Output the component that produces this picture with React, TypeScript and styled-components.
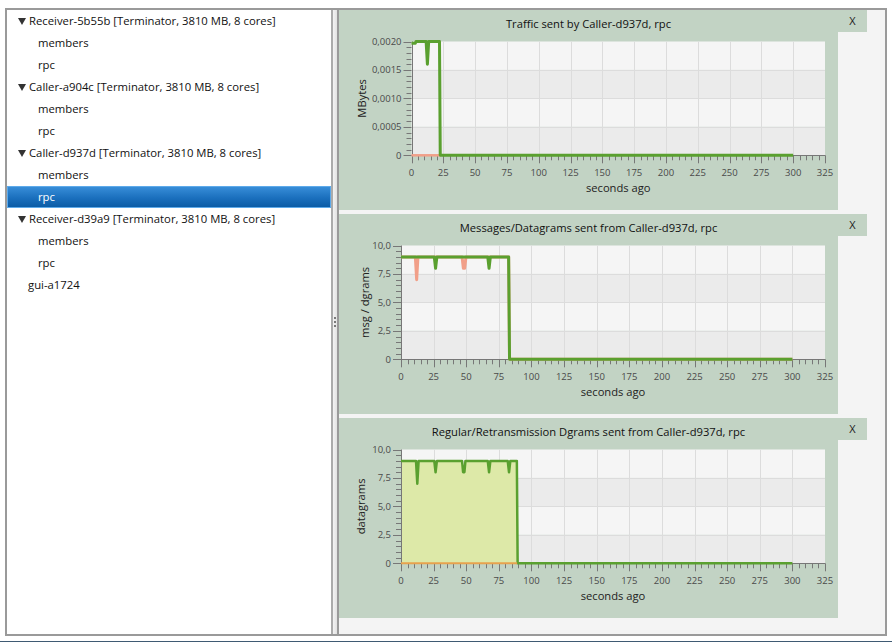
import React from 'react';
import styled, { createGlobalStyle } from 'styled-components';

const GlobalStyle = createGlobalStyle`
  html, body { margin: 0; padding: 0; background: #ffffff; }
  body { font-family: "Open Sans", "Noto Sans", sans-serif; }
`;

const Page = styled.div`
  width: 892px;
  height: 642px;
  box-sizing: border-box;
  padding: 8px 5px 0 5px;
  display: flex;
  flex-direction: column;
  background: #ffffff;
`;

const Frame = styled.div`
  height: 628px;
  box-sizing: border-box;
  border: 2px solid #9a9a9a;
  display: flex;
`;

const StatusEdge = styled.div`
  margin: 5px -5px 0;
  height: 1px;
  background: #3f5a73;
`;

const TreePane = styled.div`
  width: 324px;
  background: #ffffff;
  display: flex;
  flex-direction: column;
  font-size: 11.3px;
  color: #111111;
`;

const TreeRow = styled.div<{ $indent: number; $selected?: boolean }>`
  height: 22px;
  line-height: 22px;
  padding-left: ${(p) => p.$indent}px;
  white-space: nowrap;
  display: flex;
  align-items: center;
  box-sizing: border-box;
  color: ${(p) => (p.$selected ? '#ffffff' : '#111111')};
  background: ${(p) =>
    p.$selected ? 'linear-gradient(to bottom, #3a90da 0%, #1a6fbd 55%, #0a5aa3 100%)' : 'transparent'};
  box-shadow: ${(p) => (p.$selected ? 'inset 0 0 0 1px #5eaaea' : 'none')};
`;

const Disclosure = styled.span`
  display: inline-block;
  width: 0;
  height: 0;
  border-left: 4px solid transparent;
  border-right: 4px solid transparent;
  border-top: 7px solid #333333;
  margin-right: 3px;
  margin-top: 1px;
`;

const Divider = styled.div`
  width: 8px;
  box-sizing: border-box;
  border-left: 2px solid #ababab;
  border-right: 2px solid #9a9a9a;
  background: linear-gradient(to right, #f3f3f3, #e2e2e2);
  display: flex;
  flex-direction: column;
  align-items: center;
  justify-content: center;
  gap: 2px;
`;

const GripDot = styled.div`
  width: 2px;
  height: 2px;
  background: #7a7a7a;
`;

const ChartsPane = styled.div`
  flex: 1;
  background: #f4f4f4;
  display: flex;
  flex-direction: column;
  gap: 4px;
`;

const ChartRow = styled.div`
  display: flex;
  align-items: flex-start;
`;

const ChartPanel = styled.div`
  width: 499px;
  height: 200px;
  background: #c2d3c4;
  display: flex;
  flex-direction: column;
`;

const ChartTitle = styled.div`
  height: 25px;
  line-height: 27px;
  text-align: center;
  font-size: 11.2px;
  color: #111111;
`;

const CloseButton = styled.div`
  width: 29px;
  height: 22px;
  line-height: 21px;
  text-align: center;
  font-size: 11px;
  color: #222222;
  background: #c2d3c4;
`;

type Pt = [number, number];
interface Series {
  pts: Pt[];
  color: string;
  width: number;
  fill?: string;
}

interface ChartProps {
  title: string;
  yLabel: string;
  yLabelX: number;
  yMax: number;
  yTickLabels: string[];
  left: number;
  series: Series[];
}

const RIGHT = 486;
const TOP = 6.5;
const BOTTOM = 120.3;
const XMAX = 325;
const GREEN = '#5aa02f';
const SALMON = '#f19f88';

const Chart: React.FC<ChartProps> = ({ title, yLabel, yLabelX, yMax, yTickLabels, left, series }) => {
  const sx = (s: number) => left + (s * (RIGHT - left)) / XMAX;
  const sy = (v: number) => BOTTOM - (v / yMax) * (BOTTOM - TOP);
  const step = yMax / 4;
  const crisp = (v: number) => Math.round(v) + 0.5;

  const bands = [0, 1, 2, 3].map((i) => {
    const y1 = sy((4 - i) * step);
    const y2 = sy((3 - i) * step);
    return (
      <rect key={`b${i}`} x={left} y={y1} width={RIGHT - left} height={y2 - y1} fill={i % 2 === 0 ? '#f5f5f5' : '#ebebeb'} />
    );
  });

  const vGrid = Array.from({ length: 12 }, (_, k) => {
    const x = crisp(sx(25 * (k + 1)));
    return <line key={`vg${k}`} x1={x} x2={x} y1={TOP} y2={BOTTOM} stroke="#dcdcdc" strokeWidth={1} />;
  });
  const hGrid = [1, 2, 3].map((j) => {
    const y = crisp(sy(j * step));
    return <line key={`hg${j}`} x1={left} x2={RIGHT} y1={y} y2={y} stroke="#dcdcdc" strokeWidth={1} />;
  });

  const xTicks: JSX.Element[] = [];
  for (let s = 0; s <= XMAX; s += 5) {
    const x = crisp(sx(s));
    const major = s % 25 === 0;
    xTicks.push(
      <line key={`xt${s}`} x1={x} x2={x} y1={BOTTOM} y2={BOTTOM + (major ? 8 : 5)} stroke="#777777" strokeWidth={1} />
    );
  }
  const yTicks: JSX.Element[] = [];
  for (let j = 0; j <= 20; j++) {
    const y = crisp(sy((j * step) / 5));
    const major = j % 5 === 0;
    yTicks.push(
      <line key={`yt${j}`} x1={left - (major ? 8 : 5)} x2={left} y1={y} y2={y} stroke="#777777" strokeWidth={1} />
    );
  }

  const xLabels = Array.from({ length: 14 }, (_, k) => (
    <text key={`xl${k}`} x={sx(25 * k)} y={141} textAnchor="middle" fontSize="9.5" fill="#4a4a4a" fontFamily="Open Sans, sans-serif">
      {25 * k}
    </text>
  ));
  const yLabels = yTickLabels.map((lab, j) => (
    <text key={`yl${j}`} x={left - 10} y={sy(j * step) + 3.4} textAnchor="end" fontSize="9.5" fill="#4a4a4a" fontFamily="Open Sans, sans-serif">
      {lab}
    </text>
  ));

  const path = (pts: Pt[]) => 'M ' + pts.map(([s, v]) => `${sx(s).toFixed(2)} ${sy(v).toFixed(2)}`).join(' L ');
  const area = (pts: Pt[]) =>
    `M ${sx(pts[0][0]).toFixed(2)} ${BOTTOM} L ` +
    pts.map(([s, v]) => `${sx(s).toFixed(2)} ${sy(v).toFixed(2)}`).join(' L ') +
    ` L ${sx(pts[pts.length - 1][0]).toFixed(2)} ${BOTTOM} Z`;

  const midY = (TOP + BOTTOM) / 2;
  const axisX = crisp(left);

  return (
    <ChartPanel>
      <ChartTitle>{title}</ChartTitle>
      <svg width={499} height={175} viewBox="0 0 499 175">
        {bands}
        {vGrid}
        {hGrid}
        {series.filter((s) => s.fill).map((s, i) => (
          <path key={`a${i}`} d={area(s.pts)} fill={s.fill} stroke="none" />
        ))}
        <line x1={axisX} x2={axisX} y1={TOP} y2={BOTTOM} stroke="#777777" strokeWidth={1} />
        <line x1={left} x2={RIGHT} y1={crisp(BOTTOM)} y2={crisp(BOTTOM)} stroke="#777777" strokeWidth={1} />
        {xTicks}
        {yTicks}
        {series.map((s, i) => (
          <path key={`s${i}`} d={path(s.pts)} fill="none" stroke={s.color} strokeWidth={s.width} strokeLinejoin="round" strokeLinecap="butt" />
        ))}
        {xLabels}
        {yLabels}
        <text x={(left + RIGHT) / 2} y={157} textAnchor="middle" fontSize="11.2" fill="#222222" fontFamily="Open Sans, sans-serif">
          seconds ago
        </text>
        <text
          x={yLabelX}
          y={midY}
          transform={`rotate(-90 ${yLabelX} ${midY})`}
          textAnchor="middle"
          fontSize="11.2"
          fill="#222222"
          fontFamily="Open Sans, sans-serif"
        >
          {yLabel}
        </text>
      </svg>
    </ChartPanel>
  );
};

const trafficSeries: Series[] = [
  { pts: [[0, 0], [23, 0]], color: SALMON, width: 2.5 },
  {
    pts: [[0, 0.00197], [3, 0.00197], [3.5, 0.002], [11.5, 0.002], [12.5, 0.0016], [13.5, 0.002], [22, 0.002], [22.6, 0], [300, 0]],
    color: GREEN,
    width: 3,
  },
];

const messageSeries: Series[] = [
  {
    pts: [[0, 9], [11, 9], [12, 7], [13, 9], [46.8, 9], [47.8, 8], [48.8, 8], [49.8, 9], [82.5, 9], [83.2, 0], [300, 0]],
    color: SALMON,
    width: 3,
  },
  {
    pts: [[0, 9], [25.5, 9], [26.5, 8], [27.5, 9], [66.5, 9], [67.5, 8], [68.5, 9], [82.5, 9], [83.2, 0], [300, 0]],
    color: GREEN,
    width: 3,
  },
];

const regularSeries: Series[] = [
  {
    pts: [
      [0, 9], [11.5, 9], [12.5, 7], [13.5, 9], [25.5, 9], [26.5, 8], [27.5, 9], [46.8, 9], [47.6, 8], [48.6, 8], [49.4, 9],
      [66.5, 9], [67.5, 8], [68.5, 9], [81.8, 9], [82.8, 8], [83.8, 9], [88.8, 9], [89.4, 0], [300, 0],
    ],
    color: GREEN,
    width: 2.5,
    fill: '#dde9a8',
  },
  { pts: [[0, 0], [89, 0]], color: '#e7a24e', width: 2 },
];

const treeRows: { label: string; kind: 'parent' | 'child' | 'leaf'; selected?: boolean }[] = [
  { label: 'Receiver-5b55b [Terminator, 3810 MB, 8 cores]', kind: 'parent' },
  { label: 'members', kind: 'child' },
  { label: 'rpc', kind: 'child' },
  { label: 'Caller-a904c [Terminator, 3810 MB, 8 cores]', kind: 'parent' },
  { label: 'members', kind: 'child' },
  { label: 'rpc', kind: 'child' },
  { label: 'Caller-d937d [Terminator, 3810 MB, 8 cores]', kind: 'parent' },
  { label: 'members', kind: 'child' },
  { label: 'rpc', kind: 'child', selected: true },
  { label: 'Receiver-d39a9 [Terminator, 3810 MB, 8 cores]', kind: 'parent' },
  { label: 'members', kind: 'child' },
  { label: 'rpc', kind: 'child' },
  { label: 'gui-a1724', kind: 'leaf' },
];

const indentFor = { parent: 11, child: 31, leaf: 21 } as const;

export default function App() {
  return (
    <>
      <GlobalStyle />
      <Page>
        <Frame>
          <TreePane>
            {treeRows.map((r, i) => (
              <TreeRow key={i} $indent={indentFor[r.kind]} $selected={r.selected}>
                {r.kind === 'parent' && <Disclosure />}
                {r.label}
              </TreeRow>
            ))}
          </TreePane>
          <Divider>
            <GripDot />
            <GripDot />
            <GripDot />
          </Divider>
          <ChartsPane>
            <ChartRow>
              <Chart
                title="Traffic sent by Caller-d937d, rpc"
                yLabel="MBytes"
                yLabelX={27}
                yMax={0.002}
                yTickLabels={['0', '0,0005', '0,0010', '0,0015', '0,0020']}
                left={72.5}
                series={trafficSeries}
              />
              <CloseButton>X</CloseButton>
            </ChartRow>
            <ChartRow>
              <Chart
                title="Messages/Datagrams sent from Caller-d937d, rpc"
                yLabel="msg / dgrams"
                yLabelX={30}
                yMax={10}
                yTickLabels={['0', '2,5', '5,0', '7,5', '10,0']}
                left={62}
                series={messageSeries}
              />
              <CloseButton>X</CloseButton>
            </ChartRow>
            <ChartRow>
              <Chart
                title="Regular/Retransmission Dgrams sent from Caller-d937d, rpc"
                yLabel="datagrams"
                yLabelX={26.5}
                yMax={10}
                yTickLabels={['0', '2,5', '5,0', '7,5', '10,0']}
                left={62}
                series={regularSeries}
              />
              <CloseButton>X</CloseButton>
            </ChartRow>
          </ChartsPane>
        </Frame>
        <StatusEdge />
      </Page>
    </>
  );
}
